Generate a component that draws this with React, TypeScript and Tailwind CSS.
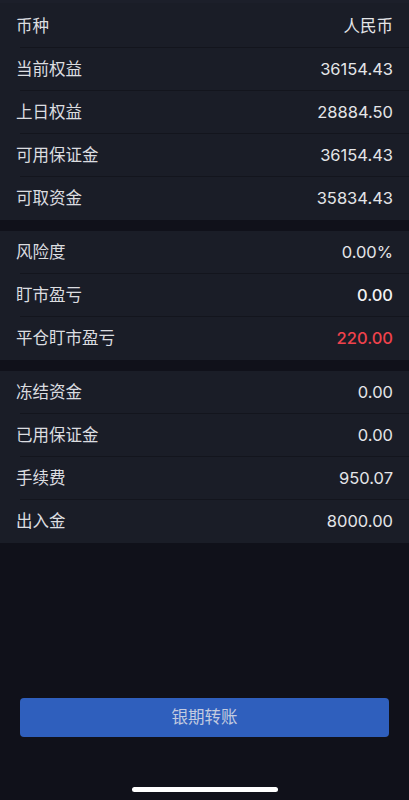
import React from 'react';

type Row = { label: string; value: string; red?: boolean; strong?: boolean };

const sections: Row[][] = [
    [
        { label: '币种', value: '人民币' },
        { label: '当前权益', value: '36154.43' },
        { label: '上日权益', value: '28884.50' },
        { label: '可用保证金', value: '36154.43' },
        { label: '可取资金', value: '35834.43' },
    ],
    [
        { label: '风险度', value: '0.00%' },
        { label: '盯市盈亏', value: '0.00', strong: true },
        { label: '平仓盯市盈亏', value: '220.00', red: true },
    ],
    [
        { label: '冻结资金', value: '0.00' },
        { label: '已用保证金', value: '0.00' },
        { label: '手续费', value: '950.07' },
        { label: '出入金', value: '8000.00' },
    ],
];

const AccountRow: React.FC<{ row: Row; last: boolean }> = ({ row, last }) => {
    let valueCls = 'text-[16.5px] text-[#e4e5e8]';
    if (row.red) valueCls = 'text-[16.5px] font-medium text-[#f0424c]';
    if (row.strong) valueCls = 'text-[16.5px] font-medium text-[#f2f2f4]';
    return (
        <div className="relative h-[43px] flex items-center justify-between px-4">
            <span className="text-[16.5px] text-[#dcdde0]">{row.label}</span>
            <span className={valueCls}>{row.value}</span>
            {/* divider, inset from the left */}
            {!last && <div className="absolute left-5 right-0 bottom-0 h-px bg-[#13151d]" />}
        </div>
    );
};

const App: React.FC = () => {
    return (
        <div
            className="h-[800px] w-full bg-[#10111a] flex flex-col overflow-hidden"
            style={{ fontFamily: 'Inter, "Noto Sans CJK SC", sans-serif' }}
        >
            <div className="h-[3px] bg-[#1c1f2a]" />

            {/* Account sections */}
            <div className="flex flex-col gap-[11px]">
                {sections.map((rows, i) => (
                    <div key={i} className={i === 0 ? 'bg-[#1a1d27] pt-[2px]' : 'bg-[#1a1d27]'}>
                        {rows.map((row, j) => (
                            <AccountRow key={row.label} row={row} last={j === rows.length - 1} />
                        ))}
                    </div>
                ))}
            </div>

            <div className="flex-1" />

            {/* Transfer button */}
            <div className="px-5">
                <button className="w-full h-[39px] rounded-[4px] bg-[#2f5fbd] text-[16.5px] text-[#c3cbe0]">
                    银期转账
                </button>
            </div>

            {/* Home indicator */}
            <div className="h-[63px] flex items-end justify-center pb-[8px]">
                <div className="w-[146px] h-[5px] rounded-full bg-white" />
            </div>
        </div>
    );
};

export default App;
